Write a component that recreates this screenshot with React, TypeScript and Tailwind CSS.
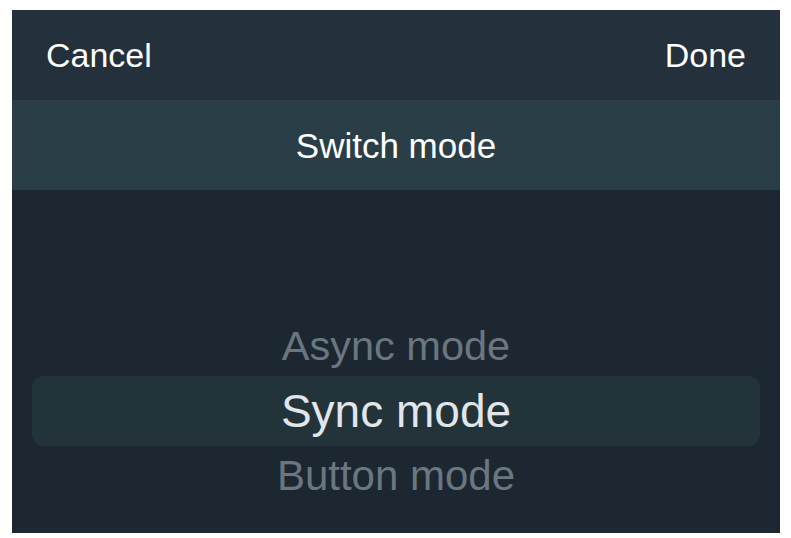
export default function App() {
  return (
    <div className="w-[791px] h-[538px] bg-white pt-[10px] pl-[12px]" style={{ fontFamily: '"Liberation Sans", Arial, sans-serif' }}>
      <div className="w-[768px] h-[523px] bg-[#1d2732] flex flex-col overflow-hidden">
        <div className="h-[90px] bg-[#24303b] flex items-center justify-between px-[34px] text-white text-[34px] leading-none">
          <span>Cancel</span>
          <span>Done</span>
        </div>
        <div className="h-[90px] bg-[#2a3e47] flex items-center justify-center text-white text-[35px] leading-none">
          Switch mode
        </div>
        <div className="flex-1 flex flex-col pt-[125px]">
          <div className="h-[61px] flex items-center justify-center text-[#6a7680] text-[41.5px] leading-none">
            Async mode
          </div>
          <div className="h-[70px] mx-[20px] rounded-[12px] bg-[#22343a] flex items-center justify-center text-[#e2e5ea] text-[46px] leading-none">
            Sync mode
          </div>
          <div className="h-[60px] flex items-center justify-center text-[#6a7680] text-[42px] leading-none">
            Button mode
          </div>
        </div>
      </div>
    </div>
  );
}
